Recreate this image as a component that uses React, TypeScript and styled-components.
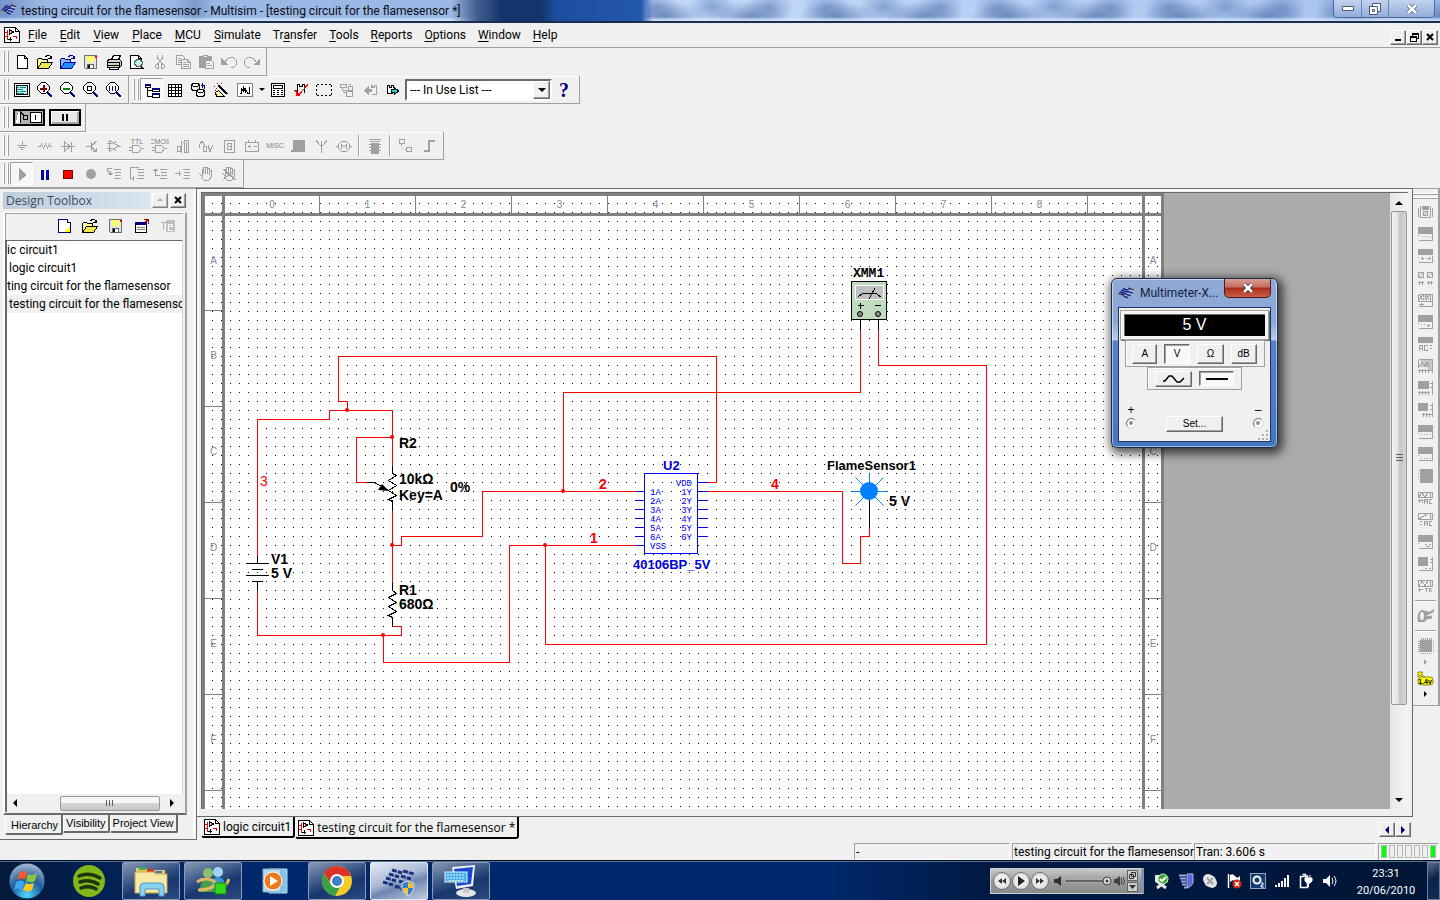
import React from "react";
import styled, { createGlobalStyle, css } from "styled-components";

const K = "#000000";
const G = "#a0a0a0";
const D = "#696969";
const FACE = "#f0f0f0";
const RED = "#ff0000";
const BLUE = "#0000ff";
const NAVY = "#000080";

const UI = `Roboto, "Liberation Sans", sans-serif`;
const TAB = `"Open Sans", "Liberation Sans", sans-serif`;
const CLASSIC = `"Liberation Sans", Arial, sans-serif`;

const GlobalStyle = createGlobalStyle`
  *, *::before, *::after { box-sizing: border-box; }
  html, body { margin: 0; background: ${FACE}; }
  body { font-family: ${UI}; font-size: 12px; line-height: 16px; color: #000; }
  button, select { font: inherit; color: inherit; margin: 0; padding: 0; border: 0; background: none; }
  ul { margin: 0; padding: 0; list-style: none; }
`;

const raised = css`
  border: 1px solid;
  border-color: #fff ${D} ${D} #fff;
  box-shadow: inset -1px -1px 0 ${G};
`;

const sunken = css`
  border: 1px solid;
  border-color: ${G} #fff #fff ${G};
`;

/* ---------- icons ---------- */

type Part = [d: string, fill?: string, stroke?: string];

const Svg = styled.svg`
  display: block;
  flex: none;
`;

function Art({ parts, size = 16 }: { parts: Part[]; size?: number }) {
  return (
    <Svg width={size} height={size} viewBox={`0 0 ${size} ${size}`} shapeRendering="crispEdges" aria-hidden="true">
      {parts.map(([d, fill = "none", stroke = K], i) => (
        <path key={i} d={d} fill={fill} stroke={stroke} />
      ))}
    </Svg>
  );
}

const N = "none";
const lens: Part[] = [
  ["M9 9L15 15M10 9L15 14M9 10L14 15", N, NAVY],
  ["M4.5 .5H8.5L12.5 4.5V7.5L8.5 11.5H4.5L.5 7.5V4.5Z", "#ffffff", K],
];
const hand = "M3.5 9.5L1.5 7.5L4.5 10.5V3.5H5.5V7.5V1.5H7.5V7.5V1.5H9.5V7.5V2.5H11.5V8.5V4.5H13.5V10.5L10.5 14.5H6.5L3.5 11.5";
const lines = "M8 3.5H15M9 6.5H15M9 9.5H15M8 12.5H15";

const icons: Record<string, Part[]> = {
  doc: [["M3.5 1.5H10.5L13.5 4.5V14.5H3.5ZM10.5 1.5V4.5H13.5", "#ffffff"]],
  newDesign: [
    ["M2.5 1.5H11.5L14.5 4.5V14.5H2.5Z", "#ffffff", NAVY],
    ["M11.5 1.5V4.5H14.5", "#ffff99", NAVY],
    ["M8 14L14 8V14Z", "#ffff00", N],
  ],
  open: [
    ["M.5 14.5V5.5L1.5 4.5H4.5L5.5 5.5H10.5V8.5", "#ffff99"],
    ["M.5 14.5L4.5 8.5H15.5L11.5 14.5Z", "#f0e850"],
    ["M8.5 3.5L9.5 1.5H12.5L14.5 4.5M11 4.5H15M14.5 2V5"],
  ],
  openBlue: [
    ["M.5 14.5V5.5L1.5 4.5H4.5L5.5 5.5H10.5V8.5", "#80c0ff", NAVY],
    ["M.5 14.5L4.5 8.5H15.5L11.5 14.5Z", "#1e90ff", "#0000a0"],
    ["M8.5 3.5L9.5 1.5H12.5L14.5 4.5M11 4.5H15M14.5 2V5", N, "#0000a0"],
  ],
  save: [
    ["M1.5 1.5H13.5V14.5H2.5L1.5 13.5Z", "#e4e4e4", "#707070"],
    ["M4 2H11V8H4Z", "#ffff66", N],
    ["M4.5 10.5H10.5V14.5H4.5Z", "#ffffff", "#606060"],
    ["M5 11H7V14H5Z", K, N],
    ["M12 2H14V4H12Z", RED, N],
  ],
  print: [
    ["M5.5 5.5L7.5 1.5H14.5L12.5 5.5Z", "#ffffff"],
    ["M1.5 6.5L3.5 5.5H13.5L15.5 7.5V11.5L13.5 13.5H1.5Z", "#d0d0d0"],
    ["M1 8.5H14M2 11.5H13M13.5 8V13"],
    ["M9 10H11V11H9Z", "#e0d000", N],
    ["M3.5 13.5H12.5V15.5H3.5Z", "#ffffff"],
  ],
  preview: [
    ["M1.5 1.5H9.5L12.5 4.5V14.5H1.5Z", "#ffffff"],
    ["M9.5 1.5V4.5H12.5"],
    ["M8 5.5H11L13.5 8V10L11 12.5H8L5.5 10V8Z", "#c0f0f0", "#606060"],
    ["M12 12L15.5 15.5M12 13L14.5 15.5", N, K],
  ],
  cut: [["M5.5 1V4L10.5 10M10.5 1V4L5.5 10M4.5 10.5H6.5V14.5H4.5L3.5 13.5V11.5ZM9.5 10.5H11.5L12.5 11.5V13.5L11.5 14.5H9.5Z", N, G]],
  copy: [
    ["M1.5 1.5H7.5L9.5 3.5V10.5H1.5ZM3 4.5H6M3 6.5H8M3 8.5H8", N, G],
    ["M6.5 5.5H12.5L15.5 8.5V14.5H6.5Z", FACE, G],
    ["M8 8.5H11M8 10.5H14M8 12.5H14M12.5 5.5V8.5H15", N, G],
  ],
  paste: [
    ["M1.5 2.5H13.5V13.5H1.5Z", G, G],
    ["M5.5 1.5H9.5V3.5H5.5Z", FACE, G],
    ["M7.5 6.5H13.5L15.5 8.5V14.5H7.5Z", FACE, G],
    ["M9 9.5H12M9 11.5H14", N, G],
  ],
  undo: [["M0 4V11H7Z", G, N], ["M3.5 8.5L6.5 4.5L9.5 3.5H12.5L15.5 6.5V10.5L12.5 13.5H10", N, G]],
  redo: [["M16 4V11H9Z", G, N], ["M12.5 8.5L9.5 4.5L6.5 3.5H3.5L.5 6.5V10.5L3.5 13.5H6", N, G]],
  fit: [
    ["M.5 1.5H15.5V14.5H.5ZM2.5 3.5H13.5V12.5H2.5Z", "#ffffff"],
    ["M3 4H13V12H3Z", "#b0f4f4", N],
    ["M3 5.5H5M6 5.5H12M3 7.5H9M3 9.5H5M6 9.5H12M3 11.5H10", N, "#208080"],
  ],
  zoomIn: [...lens, ["M6 3V10M7 3V10M3 6H10M3 7H10", N, "#800000"]],
  zoomOut: [...lens, ["M3 6H10M3 7H10", N, "#008000"]],
  zoomArea: [...lens, ["M4.5 4.5H8.5V8.5H4.5Z"]],
  zoom100: [...lens, ["M3.5 4V9M6.5 4V9M9.5 4V9", N, NAVY]],
  tree: [
    ["M1.5 2.5H6.5V5.5H1.5ZM8.5 6.5H15.5V9.5H8.5ZM8.5 12.5H15.5V15.5H8.5ZM3.5 6V14.5H8M4 8.5H8", "#ffffff"],
    ["M1 2H7V4H1ZM8 6H16V8H8ZM8 11H16V13H8Z", NAVY, N],
  ],
  grid: [["M1.5 2.5H14.5V14.5H1.5ZM1 5.5H15M1 8.5H15M1 11.5H15M4.5 2V15M8.5 2V15M11.5 2V15", "#ffffff"]],
  database: [
    ["M1.5 2.5L3.5 1.5H7.5L9.5 2.5V7.5L7.5 8.5H3.5L1.5 7.5ZM2 3.5L4 4.5H7L9 3.5", "#f0f0f0"],
    ["M6.5 8.5L8.5 7.5H12.5L14.5 8.5V13.5L12.5 14.5H8.5L6.5 13.5ZM7 9.5L9 10.5H12L14 9.5", "#f0f0f0"],
    ["M11 3.5H15M12.5 1V6M14.5 3V6.5", N, NAVY],
  ],
  wizard: [
    ["M5.5 3.5L14.5 12.5M5.5 4.5L13.5 12.5M6.5 3.5L15.5 12.5"],
    ["M2.5 10.5L5.5 8.5L11.5 14.5H3.5Z", "#f0f0a0"],
    ["M1 4.5H2M3 6.5H4M8 1.5H9M2 8.5H3M4 1.5H5", N, "#c00000"],
  ],
  graph: [
    ["M.5 1.5H15.5V14.5H.5Z", "#ffffff", "#808080"],
    ["M3 11.5H4.5V6.5L6.5 9.5V4.5L8.5 10.5V6.5L10.5 11.5H12.5V5", N, K],
  ],
  calc: [
    ["M1.5 1.5H14.5V14.5H1.5Z", "#ffffff"],
    ["M3.5 3.5H12.5V6.5H3.5Z"],
    ["M3 8.5H5M7 8.5H9M11 8.5H13M3 10.5H5M7 10.5H9M11 10.5H13M3 12.5H5M7 12.5H9M11 12.5H13"],
  ],
  erc: [
    ["M4.5 11V2.5H6.5V4.5H9.5V2.5H11.5V11", N, K],
    ["M1.5 8L5.5 13.5L14.5 2.5M2.5 8L6 12.5L15 2.5M3 11H6V13H3Z", N, RED],
  ],
  select: [["M.5 3V5M.5 7V9M.5 11V13M15.5 3V5M15.5 7V9M15.5 11V13M1 2.5H3M5 2.5H7M9 2.5H11M13 2.5H15M1 13.5H3M5 13.5H7M9 13.5H11M13 13.5H15"]],
  hierDim: [["M1.5 2.5H7.5V5.5H1.5ZM9.5 4.5H13.5V8.5H9.5ZM7.5 9.5H13.5V14.5H7.5ZM3.5 6V8.5H8M4 10.5H7M10 2.5H12", N, G]],
  backDim: [["M2 8.5L7 4V13ZM7 7H10V10H7Z", G, N], ["M9.5 6V3.5H10.5V5H12.5V3.5H14.5V12.5H10", N, G]],
  forward: [["M8 11.5H2.5V3.5H4.5V5H6.5V3.5H8.5V6", "#ffffff"], ["M6.5 7.5H9.5V5.5L13.5 9L9.5 12.5V10.5H6.5Z", "#00e0e0"]],
  ground: [["M3 7.5H13M5 9.5H11M7 11.5H9M8.5 3V7", N, G]],
  resistor: [["M1 8.5H3L4.5 6L6.5 10L8.5 6L10.5 10L12.5 6L13.5 8.5H15", N, G]],
  diode: [["M1 8.5H15M4.5 4V13L10.5 8.5ZM11.5 3.5V13.5", N, G]],
  transistor: [["M3 8.5H8M8.5 4V13M9 7.5L13.5 3M9 9.5L13 13.5H10M13.5 10V14", N, G]],
  opamp: [["M3.5 2.5V13.5L12.5 8ZM1 5.5H6M1 10.5H6M12 8.5H15M9 3V5M9 11V13", N, G]],
  gate: [["M4.5 7.5H10.5L13.5 10.5L10.5 14.5H4.5ZM1 9.5H4M1 12.5H4M13 10.5H16", N, G]],
  mixed: [["M2.5 8.5H5.5V13.5H2.5ZM6.5 3V14.5M9.5 2.5H13.5V14.5H9.5ZM8 4.5H10M11 4V14", N, G]],
  analog: [["M1 9.5L2.5 4.5L4.5 3.5L6.5 7.5M5.5 8.5H8.5V13.5H5.5ZM10 7.5L12 13.5L14.5 7.5", N, G]],
  indicator: [["M3.5 2.5H13.5V14.5H3.5ZM6.5 5H10.5M6.5 8.5H10.5M6.5 11.5H10.5M6.5 5V8M10.5 5V12M6.5 9V12", N, G]],
  power: [["M1.5 4.5H14.5V13.5H1.5ZM4.5 2V4M11.5 2V4M3.5 8.5H7M9.5 8.5H13M5.5 7V10", N, G]],
  adv: [["M3 2H15V12H3ZM1 12H15V14H1Z", G, N], ["M1 13.5H15", N, G]],
  rf: [["M3 2.5L8.5 8.5L14 2.5M8.5 3V15", N, G]],
  motor: [["M0 8.5H3M13 8.5H16M5.5 3.5H10.5L13.5 6.5V10.5L10.5 13.5H5.5L2.5 10.5V6.5ZM5.5 11V6.5L8 9L10.5 6.5V11", N, G]],
  mcu: [["M4 5H12V16H4ZM2 6H14V7H2ZM2 9H14V10H2ZM2 12H14V13H2Z", G, N], ["M2 1.5H14M3 3.5H13", N, G]],
  hblock: [["M1.5 1.5H6.5V5.5H1.5ZM8.5 9.5H13.5V13.5H8.5ZM3.5 6V8M3.5 10.5H5M7 11.5H8", N, G]],
  bus: [["M3 12H7V2H14V4H9V14H3Z", G, N]],
  play: [["M5 2L13 9L5 15Z", G, N]],
  pause: [["M4.5 4.5H6.5V13.5H4.5ZM9.5 4.5H11.5V13.5H9.5Z", "#0000ff", NAVY]],
  stop: [["M3.5 4.5H12.5V12.5H3.5Z", RED, "#800000"]],
  stepInto: [[lines, N, G], ["M6 2.5H1.5V5.5H4.5V9M2 7.5H7M3 8.5H6", N, G]],
  stepOver: [[lines, N, G], ["M9.5 1.5H1.5V12.5H5M4.5 10V15", N, G]],
  stepOut: [[lines, N, G], ["M3.5 3V9.5H8M1 4.5H6M2 3.5H5", N, G]],
  runTo: [[lines, N, G], ["M0 7.5H6M4.5 5V10", N, G]],
  breakpoint: [[hand, N, G]],
  removeBp: [[hand, N, G], ["M2 3L14 14M14 3L2 14M3 3L15 14", N, G]],
  window: [
    ["M1.5 4.5H12.5V14.5H1.5Z", "#ffffff"],
    ["M1 4H13V7H1Z", NAVY, N],
    ["M3 9.5H11M3 11.5H11", N, "#808080"],
    ["M10 1.5H15M14.5 1V6M11 4.5L14 1.5", N, "#a00000"],
  ],
  rename: [["M6 2H15V14H6Z", "#c0c0c0", N], ["M1 4.5H6M3.5 5V12", N, "#b0b0b0"], ["M8.5 8.5H12.5V6.5H8.5V12.5H13", N, "#ffffff"]],
  schematic: [
    ["M.5 .5H11.5L15.5 4.5V15.5H.5Z", "#ffffff"],
    ["M11.5 .5V4.5H15.5"],
    ["M1 5.5H4M3.5 3V12.5H8M7.5 3V7M9 9.5H12.5V12M1 9.5H3", N, RED],
    ["M5.5 2.5L9.5 5L5.5 7.5ZM4 12H8M6 10V14"],
  ],
};

const block = "M0 0H15V7H0Z";
const shell = "M0 8.5H1M.5 13.5H14.5V7";
const sideIcons: Record<string, Part[]> = {
  "Multimeter": [["M4 1H11V5H4Z", G, N], ["M.5 3V12M2.5 1V12H12.5V1M14.5 3V12M5.5 6.5H9.5V10.5H5.5ZM6 10L9.5 6.5", N, G]],
  "Function generator": [[block, G, N], [shell + "M4 9.5H5M7 9.5H8M10 9.5H11M11.5 10.5H13", N, G]],
  "Wattmeter": [["M0 0H15V6H0Z", G, N], [shell + "M3 9.5H6M4.5 8V11M8 9.5H9M10 9.5H13M11.5 8V11", N, G]],
  "Oscilloscope": [["M.5 1.5H5.5V6.5H.5ZM9.5 1.5H14.5V6.5H9.5ZM1 6L5 2M10 6L14 2M0 11.5H6M9 11.5H15M1.5 10V14M4.5 10V14M10.5 10V14M13.5 10V14", N, G]],
  "Four channel oscilloscope": [["M.5 1.5H14.5V13.5H1M.5 1.5V9M1 8.5H15M1 2L5 7L8 2L11 7M1 7L5 2L8 7L11 2M12.5 2V8M1 11.5H6M3.5 10V14", N, G]],
  "Bode plotter": [[block, G, N], [shell + "M3 9.5H4M6 9.5H7M9 10.5H12M10.5 9V12", N, G]],
  "Frequency counter": [["M0 0H15V6H0Z", G, N], ["M1.5 14V8.5H4.5V14M2 11.5H4M10 8.5H6.5V13.5H9.5V11.5M12 8.5H14M12 11.5H14", N, G]],
  "Word generator": [["M.5 .5H14.5V13.5M.5 1V9M1 8L4 3L7 8L9 3L11 8", "#c8c8c8", G], ["M0 11.5H13M1.5 10V14M4.5 10V14M7.5 10V14M10.5 10V14", N, G]],
  "Logic converter": [["M0 0H11V8H0Z", G, N], ["M14.5 0V14M12 2.5H14M12 6.5H14M0 11.5H12M1.5 10V14M4.5 10V14M7.5 10V14M10.5 10V14", N, G]],
  "Logic analyzer": [["M0 0H10V8H0Z", G, N], ["M14.5 0V14M12 2.5H14M12 6.5H14M4 11.5H14M5.5 10V14M8.5 10V14M11.5 10V14", N, G]],
  "IV analyzer": [[block, G, N], [shell + "M3 9.5H4M6 9.5H7M9 9.5H10M12 9.5H13", N, G]],
  "Distortion analyzer": [[block, G, N], [shell + "M3 11.5H4M6 11.5H7M9 11.5H10M12 11.5H13", N, G]],
  "Spectrum analyzer": [["M2 0H15V14H2Z", G, N], ["M.5 1V2M.5 4V5M.5 7V8M.5 10V11", N, G]],
  "Network analyzer": [["M.5 1.5H14.5V6.5H.5ZM1 6L4 2L7 6L10 2M12.5 1V6M0 9.5H5M1.5 8V12M4.5 8V12M6.5 13V8.5H9.5V13M7 10.5H9M14 8.5H11.5V12.5H13.5", N, G]],
  "Agilent generator": [["M.5 .5H14.5V6.5H.5ZM1 6L9 1M12.5 1V6M2 8.5H4M2 11.5H4M6.5 13V8.5H9.5V13M7 10.5H9M14 8.5H11.5V12.5H13.5", N, G]],
  "Agilent multimeter": [[block, G, N], [shell + "M7 9.5H9M11 9.5H13M8 11.5H12", N, G]],
  "Agilent oscilloscope": [["M0 0H10V9H0Z", G, N], ["M14.5 0V13.5H1M12 2.5H14M12 5.5H14M7 11.5H9M11 11.5H13", N, G]],
  "Tektronix oscilloscope": [["M.5 1.5H14.5V7.5H.5ZM1 7L4 2L7 7L10 2M12.5 2V7M0 10.5H5M1.5 9V13M7 9.5H10M8.5 9V13M11.5 9V13M14 9L12 11L14 13", N, G]],
};

/* ---------- window frame ---------- */

const Frame = styled.div`
  position: relative;
  display: flex;
  flex-direction: column;
  min-height: 100vh;
  overflow: hidden;
  background: ${FACE};
`;

const TitleBar = styled.header`
  display: flex;
  align-items: flex-start;
  height: 23px;
  padding-left: 1px;
  gap: 4px;
  border-bottom: 2px solid #1b2c52;
  background:
    linear-gradient(180deg, rgba(255, 255, 255, 0.1) 0 80%, rgba(220, 235, 255, 0.8) 95%),
    linear-gradient(90deg, rgba(60, 95, 160, 0.5) 0, transparent 3% 12%, rgba(50, 80, 140, 0.35) 13.5%, transparent 15% 28%, transparent 100%),
    linear-gradient(90deg, #8fb0e2 0 45%, transparent 45%),
    radial-gradient(ellipse at center, rgba(60, 95, 160, 0.7), transparent 65%) 20px 0 / 86px 34px,
    radial-gradient(ellipse at center, rgba(80, 120, 185, 0.65), transparent 60%) 0 -12px / 57px 38px,
    linear-gradient(110deg, #a9c4ee 0, #bcd3f6 50%, #9cbbec 100%);
`;
const TitleText = styled.h1`
  flex: 1;
  align-self: stretch;
  margin: 0;
  padding-top: 3px;
  font-size: 12px;
  line-height: 16px;
  font-weight: 400;
  white-space: nowrap;
  color: #0c0c14;
  background: linear-gradient(90deg,
    transparent 0 430px, #46618f 455px, #14356c 480px 520px, #1d4d9e 535px, #2458ac 620px, transparent 632px);
`;
const AppIcon = styled.span`
  padding-top: 3px;
`;
const Caption = styled.div`
  display: flex;
  height: 18px;
  margin-right: 5px;
  border: 1px solid #51699a;
  border-top: 0;
  border-radius: 0 0 5px 5px;
  background: linear-gradient(#c2d2ee, #93aedb);
`;
const CaptionButton = styled.button<{ $w: number }>`
  display: grid;
  place-items: center;
  width: ${(p) => p.$w}px;
  & + & { border-left: 1px solid #6a83b3; }
`;

const MenuBar = styled.nav`
  display: flex;
  align-items: center;
  height: 25px;
  padding: 0 2px 0 4px;
  border-bottom: 1px solid ${G};
`;
const MenuItem = styled.button`
  margin-left: 13px;
  white-space: nowrap;
  &:first-of-type { margin-left: 8px; }
  &:nth-of-type(n + 7) { margin-left: 12px; }
  u { text-underline-offset: 2px; }
`;
const MdiButtons = styled.div`
  display: flex;
  margin-left: auto;
  padding-top: 4px;
`;
const SmallButton = styled.button<{ $dim?: boolean }>`
  display: grid;
  place-items: center;
  width: 16px;
  height: 15px;
  background: ${FACE};
  ${raised}
  opacity: ${(p) => (p.$dim ? 0.8 : 1)};
`;

/* ---------- toolbars ---------- */

const BarRow = styled.div`
  display: flex;
  gap: 1px;
`;
const Bar = styled.div`
  display: flex;
  align-items: center;
  height: 28px;
  padding-right: 3px;
  border: solid ${G};
  border-width: 0 1px 1px 0;
  box-shadow: inset 0 1px 0 #fff;
`;
const Grip = styled.span`
  align-self: stretch;
  width: 7px;
  margin: 3px 0 3px 3px;
  background: linear-gradient(90deg, #fff 0 1px, ${G} 1px 2px, transparent 2px 4px, #fff 4px 5px, ${G} 5px 6px, transparent 6px);
`;
const Tool = styled.button<{ $on?: boolean; $w?: number }>`
  display: grid;
  place-items: center;
  width: ${(p) => p.$w ?? 23}px;
  height: 23px;
  ${(p) => p.$on && css`${sunken} background: #f7f7f7;`}
`;
const Rule = styled.span`
  width: 2px;
  height: 21px;
  margin: 0 3px;
  border-left: 1px solid ${G};
  border-right: 1px solid #fff;
`;
const Combo = styled.label`
  display: grid;
  width: 147px;
  height: 22px;
  margin-left: 1px;
  border: 2px solid;
  border-color: ${D} #fff #fff ${D};
  background: #fff;
`;
const ComboSelect = styled.select`
  grid-area: 1 / 1;
  appearance: none;
  padding-left: 3px;
  outline: 0;
`;
const ComboArrow = styled.span`
  grid-area: 1 / 1;
  justify-self: end;
  display: grid;
  place-items: center;
  width: 17px;
  background: ${FACE};
  pointer-events: none;
  ${raised}
`;
const Help = styled(Tool)`
  width: 24px;
  color: ${NAVY};
  font: 900 20px/22px "Liberation Serif", serif;
`;
const SimSwitch = styled.button`
  display: grid;
  place-items: center;
  width: 32px;
  height: 17px;
  margin: 0 1px 0 3px;
  border: 2px solid #000;
  background: #e8e8e8;
  box-shadow: inset 1px 1px 0 #fff, inset -2px -2px 0 #a8a8a8;
`;

/* ---------- workspace ---------- */

const Workspace = styled.main`
  display: flex;
  flex: 1;
  min-height: 0;
`;

const Dock = styled.aside`
  display: flex;
  flex-direction: column;
  flex: none;
  width: 197px;
  margin-bottom: 3px;
  padding: 3px 10px 4px 3px;
  border: solid ${D};
  border-width: 0 1px 1px 0;
  box-shadow: inset 0 1px 0 ${G}, inset -3px 0 0 #fafafa;
`;
const DockHead = styled.div`
  display: flex;
  gap: 2px;
  align-items: center;
  height: 18px;
  margin-bottom: 3px;
`;
const DockTitle = styled.h2`
  flex: 1;
  margin: 0;
  padding-left: 3px;
  font: 400 12px/17px ${TAB};
  color: #3c4a60;
  background: linear-gradient(90deg, #bfcddb, #d7e4f2);
`;
const DockBody = styled.div`
  display: flex;
  flex: 1;
  flex-direction: column;
  margin-right: -1px;
  padding: 0 2px 1px 0;
  border: solid;
  border-width: 1px 2px 2px 2px;
  border-color: #fff ${G} ${D} #fff;
`;
const DockTools = styled.div`
  display: flex;
  align-items: flex-start;
  justify-content: flex-end;
  height: 27px;
  padding-right: 2px;
  border: solid ${G};
  border-width: 1px 0 0 1px;
`;
const Tree = styled.ul`
  flex: 1;
  border: solid ${D};
  border-width: 1px 1px 0 2px;
  border-right-color: #d8d8d8;
  background: #fff;
  overflow: hidden;
`;
const TreeItem = styled.li<{ $indent?: boolean; $on?: boolean }>`
  overflow: hidden;
  white-space: nowrap;
  line-height: 18px;
  padding-left: ${(p) => (p.$indent ? 2 : 0)}px;
  background: ${(p) => (p.$on ? FACE : "transparent")};
`;
const HScroll = styled.div`
  display: flex;
  align-items: center;
  justify-content: space-between;
  height: 18px;
  padding: 0 7px 0 4px;
  border-left: 2px solid ${D};
  background: ${FACE};
`;
const HThumb = styled.span`
  display: grid;
  place-items: center;
  width: 100px;
  height: 15px;
  margin-left: 32px;
  border: 1px solid #989898;
  border-radius: 2px;
  background: linear-gradient(#f6f6f6 45%, #d4d4d8 50%, #c8c8cc);
`;
const DockTabs = styled.div`
  display: flex;
  align-items: flex-start;
  height: 20px;
  margin-left: 2px;
`;
const DockTab = styled.button<{ $on?: boolean }>`
  height: ${(p) => (p.$on ? 20 : 18)}px;
  padding: ${(p) => (p.$on ? "2px 3px 0 5px" : "0 2px")};
  border: solid;
  border-width: 0 2px 2px 1px;
  border-color: ${FACE} ${D} ${D} #fff;
  border-radius: 0 0 2px 2px;
  font: 400 11px/16px ${CLASSIC};
  white-space: nowrap;
`;

const Center = styled.section`
  display: flex;
  flex: 1;
  flex-direction: column;
  min-width: 0;
  border-top: 1px solid ${D};
`;
const Mdi = styled.div`
  display: flex;
  flex: 1 1 0;
  min-height: 0;
  padding: 3px 4px 7px;
  border: solid ${D};
  border-width: 0 1px 1px 0;
  box-shadow: inset 2px 2px 0 #fafafa;
`;
const Viewport = styled.div`
  display: flex;
  flex: 1;
  min-width: 0;
  border: solid ${D};
  border-width: 1px 0 0 1px;
  background: #ababab;
  overflow: hidden;
`;
const VScroll = styled.div`
  display: flex;
  flex-direction: column;
  align-items: center;
  flex: none;
  width: 18px;
  margin-left: auto;
  padding: 6px 1px 5px;
  background: linear-gradient(90deg, #e6e6e6, #f4f4f4);
`;
const VTrack = styled.div`
  flex: 1;
  align-self: stretch;
  margin: 4px 0;
`;
const VThumb = styled.div`
  display: grid;
  place-items: center;
  height: 85%;
  border: 1px solid #989898;
  border-radius: 2px;
  background: linear-gradient(90deg, #f4f4f4, #e0e0e2 45%, #c4c4c8 55%, #d4d4d6);
`;

/* ---------- sheet ---------- */

const Sheet = styled.div`
  display: grid;
  grid-template: 20px 1fr / 20px 1fr 19px;
  flex: none;
  width: 962px;
  border: 3px solid #808080;
  border-bottom: 0;
  overflow: hidden;
  background:
    linear-gradient(#fff 0 8px, transparent 8px) -1px -1px / 9px 9px,
    linear-gradient(90deg, #fff 0 8px, #000 8px) -1px -1px / 9px 9px;
`;
const Corner = styled.span<{ $right?: boolean }>`
  border: solid #808080;
  border-width: ${(p) => (p.$right ? "0 0 3px 3px" : "0 3px 3px 0")};
`;
const TopRuler = styled.div`
  display: flex;
  min-width: 0;
  overflow: hidden;
  border-bottom: 3px solid #808080;
`;
const SideRuler = styled.div<{ $right?: boolean }>`
  min-height: 0;
  overflow: hidden;
  border: solid #808080;
  border-width: ${(p) => (p.$right ? "0 0 0 3px" : "0 3px 0 0")};
`;
const label = css`
  display: flex;
  align-items: center;
  justify-content: center;
  flex: none;
  color: #808a98;
  font: 400 10px/14px ${CLASSIC};
`;
const ColMark = styled.span`
  ${label}
  width: 96px;
  border-right: 1px solid #808080;
  &:first-child { width: 95px; }
`;
const RowMark = styled.span`
  ${label}
  height: 96px;
  padding-bottom: 5px;
  border-bottom: 1px solid #808080;
  &:first-child { height: 95px; }
`;
const Schematic = styled.svg`
  display: block;
  width: 917px;
  height: 593px;
`;

const wires = [
  "M707 482H716V356H338V401H347V410",
  "M257 555V419H329V410H392V465",
  "M392 437H356V482H366",
  "M392 510V582",
  "M392 626H401V635H257V590",
  "M383 635V662H509V545H635",
  "M392 545H401V536H482V491H635",
  "M563 491V392H860V329",
  "M878 329V365H986V644H545V545",
  "M707 491H842V563H860V536H869V527",
];
const joints = [[347, 410], [392, 437], [392, 545], [383, 635], [563, 491], [545, 545]];
const pinRows = [491, 500, 509, 518, 527, 536];

function Circuit() {
  return (
    <Schematic viewBox="225 216 917 593" role="img" aria-label="Flame sensor test circuit">
      <g transform="translate(.5 .5)" fill="none" stroke={RED} shapeRendering="crispEdges">
        {wires.map((d) => <path key={d} d={d} />)}
      </g>
      {joints.map(([x, y]) => <circle key={`${x}-${y}`} cx={x} cy={y} r="2" fill={RED} />)}

      <g transform="translate(.5 .5)" fill="none" stroke={K} shapeRendering="crispEdges">
        <path d="M257 555V563M245 563H268M251 569H262M245 575H268M251 581H262M257 581V590" />
        <path d="M366 482H374L388 490M392 465V473L396 475L388 480L396 485L388 490L396 495L388 499L392 501V510" />
        <path d="M392 582V590L396 593L388 597L396 602L388 606L396 611L388 615L392 617V626" />
        <path d="M869 500V527M860 314V329M878 314V329" />
      </g>
      <path d="M389 491L378 490L382 484Z" fill={K} />

      <g transform="translate(.5 .5)" fill="none" stroke={BLUE} shapeRendering="crispEdges">
        <rect x="644" y="473" width="53" height="80" />
        <path d={pinRows.map((y) => `M635 ${y}H644M697 ${y}H707`).join("") + "M635 545H644M697 482H707"} />
      </g>
      <g fill={BLUE} fontFamily='"Liberation Mono", monospace' fontSize="9">
        <text x="692" y="486" textAnchor="end">VDD</text>
        {pinRows.map((y, i) => <text key={y} x="650" y={y + 4}>{`${i + 1}A`}</text>)}
        {pinRows.map((y, i) => <text key={y} x="692" y={y + 4} textAnchor="end">{`${i + 1}Y`}</text>)}
        <text x="650" y="549">VSS</text>
      </g>

      <path transform="translate(.5 .5)" d="M851 491H887M869 473V491M855 477L869 491L883 477M855 505L869 491L883 505" fill="none" stroke="#0080ff" />
      <circle cx="869" cy="491" r="9" fill="#0080ff" />

      <g shapeRendering="crispEdges" stroke={K}>
        <rect x="851.5" y="281.5" width="35" height="38" fill="#c0dcc0" />
        <rect x="855" y="285" width="28" height="14" fill="#c0c0c0" stroke="#ffffff" />
        <path d="M858 297L862 294L867 293H872L877 294L881 297M869 299L875 288M858 305.5H864M860.5 303V309M875 305.5H881" fill="none" />
      </g>
      <circle cx="860" cy="314" r="2.5" fill="#909090" stroke={K} />
      <circle cx="878" cy="314" r="2.5" fill="#909090" stroke={K} />
      <text x="853" y="277" fontFamily='"Liberation Mono", monospace' fontSize="13" fontWeight="700">XMM1</text>

      <g fontFamily='"Liberation Sans", Arial, sans-serif' fontWeight="700" fontSize="14">
        <text x="399" y="448">R2</text>
        <text x="399" y="484">10kΩ</text>
        <text x="399" y="500">Key=A</text>
        <text x="450" y="492">0%</text>
        <text x="399" y="595">R1</text>
        <text x="399" y="609">680Ω</text>
        <text x="271" y="564">V1</text>
        <text x="271" y="578">5 V</text>
        <text x="889" y="506">5 V</text>
      </g>
      <g fontFamily='"Liberation Sans", Arial, sans-serif' fontWeight="700" fontSize="13">
        <text x="827" y="470">FlameSensor1</text>
        <text x="663" y="470" fill="#0000e0">U2</text>
        <text x="633" y="569" fill="#0000e0">40106BP_5V</text>
        <g fill={RED} fontSize="14">
          <text x="260" y="486" fontWeight="400">3</text>
          <text x="599" y="489">2</text>
          <text x="590" y="543">1</text>
          <text x="771" y="489">4</text>
        </g>
      </g>
    </Schematic>
  );
}

/* ---------- document tabs, side bar, status ---------- */

const DocTabs = styled.div`
  display: flex;
  align-items: flex-start;
  flex: none;
  height: 26px;
  padding: 0 2px 0 4px;
`;
const DocTab = styled.button<{ $on?: boolean }>`
  display: flex;
  align-items: center;
  gap: 3px;
  height: ${(p) => (p.$on ? 22 : 21)}px;
  padding: ${(p) => (p.$on ? "2px 2px 0" : "0 2px")};
  border: solid #000;
  border-width: 0 2px 2px 1px;
  border-left-color: #fff;
  border-radius: 0 0 3px 3px;
  font-family: ${(p) => (p.$on ? TAB : UI)};
  white-space: nowrap;
  background: ${FACE};
`;
const TabNav = styled.div`
  display: flex;
  margin: 5px 0 0 auto;
`;

const Instruments = styled.aside`
  display: flex;
  flex: none;
  flex-direction: column;
  align-items: center;
  align-self: flex-start;
  width: 27px;
  height: 518px;
  padding-top: 4px;
  border: solid ${G};
  border-width: 1px 2px 1px 0;
`;
const SideGrip = styled.span`
  flex: none;
  align-self: stretch;
  height: 8px;
  background: linear-gradient(#fff 0 1px, ${G} 1px 2px, transparent 2px 4px, #fff 4px 5px, ${G} 5px 6px, transparent 6px);
`;
const SideTool = styled.button`
  display: grid;
  place-items: center;
  flex: none;
  width: 23px;
  height: 22px;
`;
const SideRule = styled.span`
  flex: none;
  align-self: stretch;
  height: 2px;
  margin: 3px 2px;
  border-top: 1px solid ${G};
  border-bottom: 1px solid #fff;
`;
const SideArrow = styled.button`
  display: grid;
  place-items: center;
  flex: none;
  height: 10px;
`;

const StatusBar = styled.footer`
  display: flex;
  justify-content: flex-end;
  gap: 2px;
  height: 17px;
  padding-right: 1px;
`;
const Pane = styled.span<{ $w: number }>`
  width: ${(p) => p.$w}px;
  padding-left: 1px;
  ${sunken}
  white-space: nowrap;
`;
const Leds = styled(Pane)`
  display: flex;
  gap: 2px;
  padding: 1px 2px;
`;
const Led = styled.i<{ $on?: boolean }>`
  flex: 1;
  border: 1px solid #b8b8b8;
  background: ${(p) => (p.$on ? "#00ff00" : FACE)};
`;

/* ---------- multimeter window ---------- */

const MeterWindow = styled.section`
  position: absolute;
  top: 278px;
  right: 162px;
  width: 167px;
  padding: 0 6px 5px;
  border: 1px solid #1c2c4c;
  border-radius: 6px;
  background: linear-gradient(180deg, #91abd6 0, #8aa6d4 25%, #b8cbe8 36%, #5583c8 37%, #4676bd 100%);
  box-shadow: inset 0 0 0 1px rgba(255, 255, 255, 0.5), 2px 3px 10px 3px rgba(0, 0, 0, 0.65);
`;
const MeterHead = styled.div`
  display: flex;
  align-items: flex-start;
  gap: 5px;
  height: 28px;
  color: #14213c;
`;
const MeterTitle = styled.h2`
  flex: 1;
  margin: 0;
  padding-top: 6px;
  font: 400 12px/16px ${UI};
  white-space: nowrap;
`;
const MeterIcon = styled.span`
  padding-top: 7px;
`;
const MeterClose = styled.button`
  display: grid;
  place-items: center;
  width: 47px;
  height: 19px;
  border: 1px solid #4a1c24;
  border-top: 0;
  border-radius: 0 0 5px 5px;
  background: linear-gradient(#d8a098, #c66a5c 45%, #b02c18 50%, #c85c48);
`;
const MeterBody = styled.div`
  display: flex;
  flex-direction: column;
  align-items: center;
  height: 135px;
  padding: 2px 1px 0;
  border: 1px solid #1c3468;
  background: ${FACE};
`;
const Reading = styled.output`
  align-self: stretch;
  height: 30px;
  padding: 1px;
  border: 4px solid #f4f4f4;
  outline: 1px solid ${G};
  outline-offset: -1px;
  background: #000;
  box-shadow: inset 1px 1px 0 ${D}, 1px 1px 0 ${D};
  color: #fff;
  text-align: center;
  font: 400 16px/20px ${CLASSIC};
`;
const Group = styled.div<{ $w: number; $h: number }>`
  display: flex;
  align-items: center;
  justify-content: space-evenly;
  width: ${(p) => p.$w}px;
  height: ${(p) => p.$h}px;
  border: 1px solid ${G};
  box-shadow: inset 1px 1px 0 #fff;
`;
const MeterButton = styled.button<{ $on?: boolean; $w: number; $h: number }>`
  display: grid;
  place-items: center;
  width: ${(p) => p.$w}px;
  height: ${(p) => p.$h}px;
  font: 400 10px/14px ${CLASSIC};
  ${raised}
  ${(p) => p.$on && css`border-color: ${D} #fff #fff ${D}; box-shadow: inset 1px 1px 0 ${G}; background: #f8f8f8;`}
`;
const Terminals = styled.div`
  display: flex;
  justify-content: space-between;
  align-items: flex-end;
  align-self: stretch;
  margin-top: 14px;
  padding: 0 5px;
`;
const Terminal = styled.span`
  display: grid;
  justify-items: center;
  font: 400 12px/13px ${CLASSIC};
  padding-bottom: 3px;
`;
const ResizeGrip = styled.span`
  align-self: flex-end;
  margin-top: -2px;
`;

/* ---------- taskbar ---------- */

const TaskBar = styled.footer`
  display: flex;
  align-items: center;
  height: 40px;
  border-top: 1px solid #000c24;
  box-shadow: inset 0 1px 0 #5b7194;
  background: linear-gradient(90deg, #04193a 0, #00286a 14%, #00286a 58%, #001a44 68%, #001636 100%);
`;
const TaskButton = styled.button<{ $open?: boolean; $active?: boolean }>`
  display: grid;
  place-items: center;
  flex: none;
  width: 58px;
  height: 38px;
  margin-right: 4px;
  ${(p) => p.$open && css`
    border: 1px solid #8a9ab8;
    border-radius: 2px;
    background: linear-gradient(160deg, #8797b4 0, #445f8e 35%, #17376e 60%, #2a4a80 100%);
  `}
  ${(p) => p.$active && css`
    border-color: #e0e8f4;
    background: linear-gradient(160deg, #e4eaf4 0, #a9b8d2 45%, #6f86b0 60%, #c0cce0 100%);
  `}
`;
const StartButton = styled(TaskButton)`
  width: 54px;
  margin-right: 6px;
`;
const MediaBand = styled.div`
  display: flex;
  align-items: center;
  gap: 1px;
  width: 154px;
  height: 26px;
  margin: 0 6px 0 auto;
  padding: 0 2px;
  border: 1px solid #d0d0d0;
  border-right: 3px solid #8494ac;
  background: linear-gradient(#c8c8c8, #9c9c9c 50%, #8a8a8a);
`;
const RoundButton = styled.button`
  display: grid;
  place-items: center;
  flex: none;
  width: 18px;
  height: 18px;
  border: 1px solid #707070;
  border-radius: 50%;
  background: radial-gradient(#fff, #d0d0d0);
`;
const TrayButton = styled.button`
  display: grid;
  place-items: center;
  width: 24px;
  height: 30px;
`;
const Clock = styled.time`
  display: block;
  width: 64px;
  margin: 2px 9px 0 12px;
  color: #fff;
  text-align: center;
  font-size: 11px;
  line-height: 17px;
  span { display: block; }
`;
const ShowDesktop = styled.button`
  width: 13px;
  height: 38px;
  border: 1px solid #6b7d9c;
  background: linear-gradient(150deg, #5a6e90, #0b2248 45%, #142c54);
`;

function ChipLogo({ w = 16, h = 13 }: { w?: number; h?: number }) {
  return (
    <Svg width={w} height={h} viewBox="0 0 32 26" aria-hidden="true">
      <path d="M2 14L16 4L31 8L17 22Z" fill="#b8c0e0" />
      <path d="M9 5L20 8M6 8L17 11M3 11L14 14M1 14L12 17M19 4L30 7M17 10L28 13M14 15L24 18M11 19L19 22" stroke="#1c2c84" strokeWidth="3" />
      <path d="M0 20L5 14M26 6L32 2" stroke="#d8a030" strokeWidth="2" />
    </Svg>
  );
}

function Arrow({ dir, color = K }: { dir: "l" | "r" | "u" | "d"; color?: string }) {
  const d = { l: "M6 0V8L2 4Z", r: "M2 0V8L6 4Z", u: "M0 6H8L4 2Z", d: "M0 2H8L4 6Z" }[dir];
  return <Svg width="8" height="8" viewBox="0 0 8 8" aria-hidden="true"><path d={d} fill={color} /></Svg>;
}

function Cross({ color = K }: { color?: string }) {
  return <Svg width="8" height="8" viewBox="0 0 8 8" aria-hidden="true"><path d="M1 1L7 7M7 1L1 7" stroke={color} strokeWidth="2" /></Svg>;
}

function Tag({ name, text, y }: { name?: string; text: string; y: number }) {
  return (
    <Svg width="18" height="16" viewBox="0 0 18 16" aria-hidden="true">
      {name && icons[name].map(([d], i) => <path key={i} d={d} fill="none" stroke={G} shapeRendering="crispEdges" />)}
      <text x="9" y={y} textAnchor="middle" fontSize="7" fontFamily='"Liberation Sans", sans-serif' fill="#808080">{text}</text>
    </Svg>
  );
}

function Tools({ items, on }: { items: [string, string][]; on?: string }) {
  return (
    <>
      {items.map(([icon, name]) => (
        <Tool key={name} $on={on === icon} aria-label={name}><Art parts={icons[icon]} /></Tool>
      ))}
    </>
  );
}

const menus: [string, string, string][] = [
  ["", "F", "ile"], ["", "E", "dit"], ["", "V", "iew"], ["", "P", "lace"], ["", "M", "CU"], ["", "S", "imulate"],
  ["Tr", "a", "nsfer"], ["", "T", "ools"], ["", "R", "eports"], ["", "O", "ptions"], ["", "W", "indow"], ["", "H", "elp"],
];

function Toolbars() {
  return (
    <>
      <BarRow>
        <Bar role="toolbar" aria-label="Standard">
          <Grip />
          <Tools items={[["doc", "New"], ["open", "Open"], ["openBlue", "Open sample"], ["save", "Save"], ["print", "Print"], ["preview", "Print preview"], ["cut", "Cut"], ["copy", "Copy"], ["paste", "Paste"], ["undo", "Undo"], ["redo", "Redo"]]} />
        </Bar>
      </BarRow>
      <BarRow>
        <Bar role="toolbar" aria-label="View">
          <Grip />
          <Tools items={[["fit", "Full screen"], ["zoomIn", "Zoom in"], ["zoomOut", "Zoom out"], ["zoomArea", "Zoom area"], ["zoom100", "Zoom 100%"]]} />
        </Bar>
        <Bar role="toolbar" aria-label="Main">
          <Grip />
          <Tools on="tree" items={[["tree", "Design toolbox"], ["grid", "Spreadsheet"], ["database", "Database manager"], ["wizard", "Component wizard"]]} />
          <Tool aria-label="Grapher" $w={25}><Art parts={icons.graph} /></Tool>
          <Tool aria-label="Grapher options" $w={9}>
            <Svg width="6" height="4" viewBox="0 0 6 4" aria-hidden="true"><path d="M0 0H6L3 3Z" /></Svg>
          </Tool>
          <Tools items={[["calc", "Postprocessor"], ["erc", "Rules check"], ["select", "Capture area"], ["hierDim", "Parent sheet"], ["backDim", "Back annotate"], ["forward", "Forward annotate"]]} />
          <Combo>
            <ComboSelect aria-label="In use list"><option>--- In Use List ---</option></ComboSelect>
            <ComboArrow><Arrow dir="d" /></ComboArrow>
          </Combo>
          <Help aria-label="Help">?</Help>
        </Bar>
      </BarRow>
      <BarRow>
        <Bar role="toolbar" aria-label="Simulation switch">
          <Grip />
          <SimSwitch aria-label="Run">
            <Svg width="28" height="13" viewBox="0 0 28 13" shapeRendering="crispEdges" aria-hidden="true">
              <rect width="28" height="13" fill="#b0b0b0" />
              <path d="M1 12L3 1H5V12Z" fill="#fff" />
              <path d="M5.5 12V1L8.500 4" fill="none" stroke={K} />
              <path d="M8.500 4.500H12.500V8.500H8.500Z" fill="none" stroke={K} />
              <path d="M15.500 1.500H26.500V11.500H15.500Z" fill="#fff" stroke={K} />
              <path d="M20.500 4V9" stroke={K} />
            </Svg>
          </SimSwitch>
          <SimSwitch aria-label="Pause">
            <Svg width="6" height="7" viewBox="0 0 6 7" aria-hidden="true"><path d="M0 0H2V7H0ZM4 0H6V7H4Z" /></Svg>
          </SimSwitch>
        </Bar>
      </BarRow>
      <BarRow>
        <Bar role="toolbar" aria-label="Components">
          <Grip />
          <Tools items={[["ground", "Sources"], ["resistor", "Basic"], ["diode", "Diodes"], ["transistor", "Transistors"], ["opamp", "Analog"]]} />
          <Tool aria-label="TTL"><Tag name="gate" text="TTL" y={6} /></Tool>
          <Tool aria-label="CMOS"><Tag name="gate" text="CMOS" y={6} /></Tool>
          <Tools items={[["mixed", "Mixed digital"], ["analog", "Mixed"], ["indicator", "Indicators"], ["power", "Power"]]} />
          <Tool aria-label="Miscellaneous"><Tag text="MISC" y={10} /></Tool>
          <Tools items={[["adv", "Peripherals"], ["rf", "RF"], ["motor", "Electromechanical"]]} />
          <Rule />
          <Tool aria-label="Microcontrollers"><Art parts={icons.mcu} /></Tool>
          <Rule />
          <Tools items={[["hblock", "Hierarchical block"], ["bus", "Bus"]]} />
        </Bar>
      </BarRow>
      <BarRow>
        <Bar role="toolbar" aria-label="Simulation">
          <Grip />
          <Tools on="play" items={[["play", "Run simulation"], ["pause", "Pause simulation"], ["stop", "Stop simulation"]]} />
          <Tool aria-label="Pause at next boundary">
            <Svg width="16" height="16" viewBox="0 0 16 16" aria-hidden="true"><circle cx="8" cy="8" r="5" fill={G} /></Svg>
          </Tool>
          <Tools items={[["stepInto", "Step into"], ["stepOver", "Step over"], ["stepOut", "Step out"], ["runTo", "Run to cursor"], ["breakpoint", "Toggle breakpoint"], ["removeBp", "Remove breakpoints"]]} />
        </Bar>
      </BarRow>
    </>
  );
}

function DesignToolbox() {
  return (
    <Dock>
      <DockHead>
        <DockTitle>Design Toolbox</DockTitle>
        <SmallButton aria-label="Collapse" $dim><Svg width="6" height="4" viewBox="0 0 6 4" aria-hidden="true"><path d="M0 3H6L3 0Z" fill={G} /></Svg></SmallButton>
        <SmallButton aria-label="Close toolbox"><Cross /></SmallButton>
      </DockHead>
      <DockBody>
        <DockTools>
          {[["newDesign", "New design"], ["open", "Open design"], ["save", "Save design"], ["window", "Close design"], ["rename", "Rename"]].map(([icon, name]) => (
            <Tool key={name} $w={26} aria-label={name}><Art parts={icons[icon]} /></Tool>
          ))}
        </DockTools>
        <Tree>
          <TreeItem>ic circuit1</TreeItem>
          <TreeItem $indent>logic circuit1</TreeItem>
          <TreeItem>ting circuit for the flamesensor</TreeItem>
          <TreeItem $indent $on>testing circuit for the flamesensor</TreeItem>
        </Tree>
        <HScroll>
          <Arrow dir="l" />
          <HThumb><Svg width="8" height="6" viewBox="0 0 8 6" aria-hidden="true"><path d="M.5 0V6M3.500 0V6M6.500 0V6" stroke="#606060" /></Svg></HThumb>
          <Arrow dir="r" />
        </HScroll>
      </DockBody>
      <DockTabs>
        <DockTab $on>Hierarchy</DockTab>
        <DockTab>Visibility</DockTab>
        <DockTab>Project View</DockTab>
      </DockTabs>
    </Dock>
  );
}

const cols = ["0", "1", "2", "3", "4", "5", "6", "7", "8", ""];
const rows = ["A", "B", "C", "D", "E", "F", ""];

function Editor() {
  return (
    <Center>
      <Mdi>
        <Viewport>
          <Sheet>
            <Corner />
            <TopRuler>{cols.map((c, i) => <ColMark key={i}>{c}</ColMark>)}</TopRuler>
            <Corner $right />
            <SideRuler>{rows.map((r, i) => <RowMark key={i}>{r}</RowMark>)}</SideRuler>
            <Circuit />
            <SideRuler $right>{rows.map((r, i) => <RowMark key={i}>{r}</RowMark>)}</SideRuler>
          </Sheet>
          <VScroll>
            <Arrow dir="u" />
            <VTrack>
              <VThumb><Svg width="7" height="8" viewBox="0 0 7 8" aria-hidden="true"><path d="M0 .5H7M0 3.500H7M0 6.500H7" stroke="#606060" /></Svg></VThumb>
            </VTrack>
            <Arrow dir="d" />
          </VScroll>
        </Viewport>
      </Mdi>
      <DocTabs>
        <DocTab><Art parts={icons.schematic} />logic circuit1</DocTab>
        <DocTab $on><Art parts={icons.schematic} />testing circuit for the flamesensor *</DocTab>
        <TabNav>
          <SmallButton aria-label="Previous tab"><Arrow dir="l" color={NAVY} /></SmallButton>
          <SmallButton aria-label="Next tab"><Arrow dir="r" color={NAVY} /></SmallButton>
        </TabNav>
      </DocTabs>
    </Center>
  );
}

function InstrumentBar() {
  return (
    <Instruments>
      <SideGrip />
      {Object.entries(sideIcons).map(([name, parts]) => (
        <SideTool key={name} aria-label={name}><Art parts={parts} size={15} /></SideTool>
      ))}
      <SideRule />
      <SideTool aria-label="Current probe">
        <Svg width="18" height="16" viewBox="0 0 18 16" aria-hidden="true">
          <path d="M5 2C1 3 0 8 1 14H7C10 13 10 10 9 8L17 4V1L12 4L10 3Z" fill={G} />
          <ellipse cx="5" cy="8" rx="2" ry="4" fill={FACE} />
          <path d="M8 10L15 9" stroke={G} strokeWidth="3" />
        </Svg>
      </SideTool>
      <SideRule />
      <SideTool aria-label="LabVIEW instruments">
        <Svg width="16" height="16" viewBox="0 0 16 16" shapeRendering="crispEdges" aria-hidden="true">
          <path d="M2 2H14V14H2Z" fill={G} />
          <path d="M3 .5H14M3 15.500H14M.5 3V14M15.500 3V14" stroke={G} strokeDasharray="1 1" strokeWidth="2" />
        </Svg>
      </SideTool>
      <SideArrow aria-label="More LabVIEW instruments"><Svg width="4" height="6" viewBox="0 0 4 6" aria-hidden="true"><path d="M0 0V6L3 3Z" fill={G} /></Svg></SideArrow>
      <SideTool aria-label="Measurement probe">
        <Svg width="17" height="15" viewBox="0 0 17 15" aria-hidden="true">
          <path d="M1 1H6L4 3L8 6L6 7L3 4L1 6Z" fill="#ffff00" stroke="#606000" strokeWidth=".7" />
          <rect x="1" y="6" width="15" height="8" rx="3" fill="#ffff00" stroke="#606000" strokeWidth=".7" />
          <text x="8" y="13" textAnchor="middle" fontSize="7" fontWeight="700" fontFamily='"Liberation Sans", sans-serif'>1.4v</text>
        </Svg>
      </SideTool>
      <SideArrow aria-label="More probes"><Svg width="4" height="6" viewBox="0 0 4 6" aria-hidden="true"><path d="M0 0V6L3 3Z" /></Svg></SideArrow>
    </Instruments>
  );
}

function Multimeter() {
  return (
    <MeterWindow role="dialog" aria-label="Multimeter-XMM1">
      <MeterHead>
        <MeterIcon><ChipLogo w={17} h={14} /></MeterIcon>
        <MeterTitle>Multimeter-X...</MeterTitle>
        <MeterClose aria-label="Close multimeter">
          <Svg width="12" height="10" viewBox="0 0 12 10" aria-hidden="true">
            <path d="M2 1L10 9M10 1L2 9" stroke="#3a2530" strokeWidth="4" />
            <path d="M2 1L10 9M10 1L2 9" stroke="#fff" strokeWidth="2.500" />
          </Svg>
        </MeterClose>
      </MeterHead>
      <MeterBody>
        <Reading>5 V</Reading>
        <Group $w={140} $h={28}>
          <MeterButton $w={25} $h={20}>A</MeterButton>
          <MeterButton $w={26} $h={20} $on>V</MeterButton>
          <MeterButton $w={27} $h={20}>Ω</MeterButton>
          <MeterButton $w={26} $h={20}>dB</MeterButton>
        </Group>
        <Group $w={95} $h={23}>
          <MeterButton $w={37} $h={16} aria-label="AC">
            <Svg width="22" height="8" viewBox="0 0 22 8" aria-hidden="true"><path d="M0 6H2L6 1H9L14 7H17L21 3" fill="none" stroke={K} strokeWidth="1.500" /></Svg>
          </MeterButton>
          <MeterButton $w={35} $h={15} $on aria-label="DC">
            <Svg width="22" height="2" viewBox="0 0 22 2" aria-hidden="true"><path d="M0 0H22V2H0Z" /></Svg>
          </MeterButton>
        </Group>
        <Terminals>
          <Terminal>+<Jack /></Terminal>
          <MeterButton $w={57} $h={16}>Set...</MeterButton>
          <Terminal>–<Jack /></Terminal>
        </Terminals>
        <ResizeGrip>
          <Svg width="11" height="11" viewBox="0 0 11 11" aria-hidden="true"><path d="M8 0H10V2H8ZM4 4H6V6H4ZM8 4H10V6H8ZM0 8H2V10H0ZM4 8H6V10H4ZM8 8H10V10H8Z" fill="#b0b0b0" /></Svg>
        </ResizeGrip>
      </MeterBody>
    </MeterWindow>
  );
}

function Jack() {
  return (
    <Svg width="12" height="12" viewBox="0 0 12 12" aria-hidden="true">
      <circle cx="6" cy="6" r="5" fill="#fff" stroke="#d8d8d8" />
      <path d="M2.500 9.500A5 5 0 0 1 9.500 2.500" fill="none" stroke="#707070" />
      <circle cx="6" cy="6" r="2" fill="#909090" />
    </Svg>
  );
}

function WindowsTaskBar() {
  return (
    <TaskBar>
      <StartButton aria-label="Start">
        <Svg width="38" height="38" viewBox="0 0 38 38" aria-hidden="true">
          <defs>
            <radialGradient id="orb" cx=".5" cy=".9" r=".9">
              <stop offset="0" stopColor="#4fd8ff" /><stop offset=".5" stopColor="#1d5c9c" /><stop offset="1" stopColor="#a8bcd4" />
            </radialGradient>
          </defs>
          <circle cx="19" cy="19" r="18" fill="url(#orb)" stroke="#0b1f40" />
          <path d="M12 10C15 8 17 9 19 11L17 18C14 16 12 16 9 18Z" fill="#f0592a" />
          <path d="M20 12C23 14 26 13 29 11L27 19C24 21 21 20 18 19Z" fill="#8cc63f" />
          <path d="M8 20C11 18 14 18 16 20L14 28C11 26 9 26 6 28Z" fill="#3fa9f5" />
          <path d="M18 21C21 23 24 22 26 21L24 28C21 30 18 29 15 28Z" fill="#ffc81e" />
        </Svg>
      </StartButton>
      <TaskButton aria-label="Spotify">
        <Svg width="32" height="34" viewBox="0 0 32 34" aria-hidden="true">
          <circle cx="16" cy="17" r="16" fill="#82b719" />
          <path d="M6 12C13 9 20 10 27 14M7 18C13 16 19 16 25 20M8 24C13 22 18 22 23 25" fill="none" stroke="#1e3410" strokeWidth="3.500" strokeLinecap="round" />
        </Svg>
      </TaskButton>
      <TaskButton $open aria-label="Explorer">
        <Svg width="34" height="32" viewBox="0 0 34 32" aria-hidden="true">
          <path d="M2 3H12L14 5H31V28H2Z" fill="#e8c860" />
          <path d="M5 2H12V5H5Z" fill="#3db04a" /><path d="M13 4H20V7H13Z" fill="#c83c28" /><path d="M21 6H28V8H21Z" fill="#3c78c8" />
          <path d="M1 7H20L22 9H33V28H1Z" fill="#f8e8a8" stroke="#c8a848" />
          <path d="M6 31V22Q6 18 10 18H26Q30 18 30 22V31H25V24H11V31Z" fill="#8cd0f0" stroke="#4898c8" />
        </Svg>
      </TaskButton>
      <TaskButton $open aria-label="Messenger">
        <Svg width="34" height="32" viewBox="0 0 34 32" aria-hidden="true">
          <circle cx="12" cy="8" r="5" fill="#88c070" /><path d="M4 27Q4 13 12 13T20 27Z" fill="#4c9c48" />
          <circle cx="22" cy="7" r="5" fill="#a0d4f4" /><path d="M15 24Q15 12 22 12T30 24Z" fill="#3c98d0" />
          <path d="M1 17C8 12 18 14 20 19C16 24 8 25 2 25M33 14Q31 20 26 22" fill="none" stroke="#e0b868" strokeWidth="3" />
          <rect x="19" y="18" width="11" height="11" fill="#30d820" stroke="#108808" />
        </Svg>
      </TaskButton>
      <TaskButton aria-label="Media Player">
        <Svg width="28" height="28" viewBox="0 0 28 28" aria-hidden="true">
          <path d="M8 2H26V26H8Z" fill="#88c4e8" stroke="#b0dcf4" /><path d="M2 2H20V25H2Z" fill="#b8d8ec" stroke="#78a8c8" />
          <circle cx="12" cy="14" r="9" fill="#f07818" stroke="#fff" /><path d="M9 9V19L17 14Z" fill="#fff" />
        </Svg>
      </TaskButton>
      <TaskButton $open aria-label="Chrome">
        <Svg width="32" height="32" viewBox="0 0 32 32" aria-hidden="true">
          <circle cx="16" cy="16" r="15" fill="#f4cc28" />
          <path d="M3 8.500A15 15 0 0 1 30 11H16L10 19Z" fill="#dc3028" />
          <path d="M3 8.500A15 15 0 0 0 14 31L19 22L10 20Z" fill="#38a048" />
          <circle cx="16" cy="16" r="7" fill="#fff" /><circle cx="16" cy="16" r="5" fill="#3c80c8" />
        </Svg>
      </TaskButton>
      <TaskButton $open $active aria-label="Multisim">
        <Svg width="34" height="32" viewBox="0 0 34 32" aria-hidden="true">
          <path d="M10 5L20 8M7 9L17 12M4 13L14 16M1 17L11 20M21 6L32 9M19 11L29 14M17 16L26 19M13 21L21 24" stroke="#1a3080" strokeWidth="3" strokeDasharray="5 1" />
          <path d="M20 18L26 16L32 18V23Q31 28 26 31Q21 28 20 23Z" fill="#3c7cd0" stroke="#dce8f8" />
          <path d="M26 17L31 19V23H26ZM21 23H26V30Q22 28 21 23Z" fill="#f8c820" />
        </Svg>
      </TaskButton>
      <TaskButton $open aria-label="On-screen keyboard">
        <Svg width="34" height="34" viewBox="0 0 34 34" aria-hidden="true">
          <path d="M8 3L31 1L29 22L12 25Z" fill="#f0f0f0" /><path d="M10 5L29 3L27 20L13 22Z" fill="#1848d0" />
          <ellipse cx="22" cy="29" rx="10" ry="4" fill="#e8e8e8" /><path d="M19 24H25V29H19Z" fill="#c8c8c8" />
          <rect x="1" y="8" width="22" height="10" fill="#48b0e8" stroke="#e0f0f8" />
          <path d="M3 11H21M3 14H21M5 16.500H19" stroke="#e8f8ff" strokeDasharray="2 1" />
        </Svg>
      </TaskButton>

      <MediaBand>
        <RoundButton aria-label="Previous"><Svg width="10" height="8" viewBox="0 0 10 8" aria-hidden="true"><path d="M5 1V7L1 4ZM9 1V7L5 4Z" fill="#333" /></Svg></RoundButton>
        <RoundButton aria-label="Play"><Svg width="8" height="10" viewBox="0 0 8 10" aria-hidden="true"><path d="M1 0V10L8 5Z" fill="#222" /></Svg></RoundButton>
        <RoundButton aria-label="Next"><Svg width="10" height="8" viewBox="0 0 10 8" aria-hidden="true"><path d="M1 1V7L5 4ZM5 1V7L9 4Z" fill="#333" /></Svg></RoundButton>
        <Svg width="76" height="16" viewBox="0 0 76 16" aria-hidden="true">
          <path d="M4 6H7L11 3V13L7 10H4Z" fill="#303030" />
          <path d="M15 7H56V9H15Z" fill="#404040" stroke="#d0d0d0" strokeWidth=".5" />
          <circle cx="57" cy="8" r="4" fill="#d8d8d8" stroke="#404040" /><circle cx="57" cy="8" r="1.500" fill="#404040" />
          <path d="M64 6H66L70 3V13L66 10H64Z" fill="#404040" /><path d="M71 5Q73 8 71 11M73 4Q76 8 73 12" fill="none" stroke="#404040" />
        </Svg>
        <Svg width="11" height="22" viewBox="0 0 11 22" aria-hidden="true">
          <rect x=".5" y=".5" width="10" height="10" fill="#d0d0d0" stroke="#606060" /><path d="M4.500 2.500H8.500V6.500H4.500ZM2.500 4.500H6.500V8.500H2.500Z" fill="none" stroke="#303030" />
          <rect x=".5" y="12.500" width="10" height="9" fill="#d0d0d0" stroke="#606060" /><path d="M2 15H9L5.500 19Z" fill="#303030" />
        </Svg>
      </MediaBand>

      <TrayButton aria-label="Updates">
        <Svg width="18" height="18" viewBox="0 0 18 18" aria-hidden="true">
          <path d="M5 10L13 16M13 9L4 16" stroke="#e8e8e8" strokeWidth="3" /><path d="M2 3H14L15 10L9 13L2 10Z" fill="#e8e8e8" />
          <circle cx="10" cy="7" r="5" fill="#38a828" stroke="#d0f0c8" /><path d="M7 7L9 9L13 5" fill="none" stroke="#fff" strokeWidth="2" />
        </Svg>
      </TrayButton>
      <TrayButton aria-label="Security">
        <Svg width="16" height="16" viewBox="0 0 16 16" aria-hidden="true"><path d="M9 1H15V10Q13 14 9 15Z" fill="#5868d8" stroke="#b0b8f0" /><path d="M1 2.500H8M2 5.500H8M3 8.500H8M4 11.500H8M6 14.500H9" stroke="#98a4e8" strokeWidth="2" /></Svg>
      </TrayButton>
      <TrayButton aria-label="Skype">
        <Svg width="16" height="16" viewBox="0 0 16 16" aria-hidden="true"><circle cx="6" cy="6" r="5" fill="#e4e4e4" /><circle cx="10" cy="10" r="5" fill="#e4e4e4" /><circle cx="8" cy="8" r="6" fill="#e4e4e4" /><path d="M5 5L11 11M11 5L5 11" stroke="#a0a0a0" strokeWidth="2" /></Svg>
      </TrayButton>
      <TrayButton aria-label="Action center">
        <Svg width="16" height="16" viewBox="0 0 16 16" aria-hidden="true"><path d="M2.500 1V15" stroke="#fff" strokeWidth="1.500" /><path d="M4 2Q7 0 9 3T14 3V9Q11 10 9 8T4 9Z" fill="#fff" /><circle cx="11" cy="11" r="4.500" fill="#d02818" /><path d="M9 9L13 13M13 9L9 13" stroke="#fff" strokeWidth="1.500" /></Svg>
      </TrayButton>
      <TrayButton aria-label="O2 connection">
        <Svg width="16" height="16" viewBox="0 0 16 16" aria-hidden="true"><rect x=".5" y=".5" width="15" height="15" fill="#123a70" stroke="#8aa4c4" /><circle cx="7" cy="7" r="3.500" fill="none" stroke="#fff" strokeWidth="2" /><path d="M11 10H13V12H11V14H14" fill="none" stroke="#fff" /></Svg>
      </TrayButton>
      <TrayButton aria-label="Signal">
        <Svg width="14" height="12" viewBox="0 0 14 12" aria-hidden="true"><path d="M0 10H2V12H0ZM3 8H5V12H3ZM6 6H8V12H6ZM9 3H11V12H9ZM12 0H14V12H12Z" fill="#fff" /></Svg>
      </TrayButton>
      <TrayButton aria-label="Battery">
        <Svg width="16" height="16" viewBox="0 0 16 16" aria-hidden="true"><path d="M2.500 3.500H9.500V14.500H2.500ZM4.500 1.500H7.500V3" fill="none" stroke="#fff" strokeWidth="1.500" /><path d="M7 5H14V8L12 10H9L7 8ZM9 2V5M12 2V5M10.500 10V14" fill="#fff" stroke="#fff" /></Svg>
      </TrayButton>
      <TrayButton aria-label="Volume">
        <Svg width="16" height="14" viewBox="0 0 16 14" aria-hidden="true"><path d="M1 5H4L8 1V13L4 9H1Z" fill="#fff" /><path d="M10 4Q12 7 10 10M12 2Q16 7 12 12" fill="none" stroke="#fff" /></Svg>
      </TrayButton>
      <Clock><span>23:31</span><span>20/06/2010</span></Clock>
      <ShowDesktop aria-label="Show desktop" />
    </TaskBar>
  );
}

export default function App() {
  return (
    <Frame>
      <GlobalStyle />
      <TitleBar>
        <AppIcon><ChipLogo /></AppIcon>
        <TitleText>testing circuit for the flamesensor - Multisim - [testing circuit for the flamesensor *]</TitleText>
        <Caption>
          <CaptionButton $w={27} aria-label="Minimize"><Svg width="12" height="5" viewBox="0 0 12 5" aria-hidden="true"><path d="M.5 .5H11.500V4.500H.5Z" fill="#fff" stroke="#485878" /></Svg></CaptionButton>
          <CaptionButton $w={27} aria-label="Restore"><Svg width="12" height="12" viewBox="0 0 12 12" aria-hidden="true"><path d="M3.500 .5H11.500V8.500H3.500Z" fill="#fff" stroke="#485878" /><path d="M.5 3.500H8.500V11.500H.5ZM3.500 6.500H5.500V8.500H3.500Z" fill="#fff" stroke="#485878" /></Svg></CaptionButton>
          <CaptionButton $w={46} aria-label="Close"><Svg width="12" height="10" viewBox="0 0 12 10" aria-hidden="true"><path d="M2 1L10 9M10 1L2 9" stroke="#485878" strokeWidth="4" /><path d="M2 1L10 9M10 1L2 9" stroke="#fff" strokeWidth="2.500" /></Svg></CaptionButton>
        </Caption>
      </TitleBar>
      <MenuBar>
        <Art parts={icons.schematic} />
        {menus.map(([a, b, c]) => <MenuItem key={a + b + c}>{a}<u>{b}</u>{c}</MenuItem>)}
        <MdiButtons>
          <SmallButton aria-label="Minimize document"><Svg width="8" height="8" viewBox="0 0 8 8" aria-hidden="true"><path d="M1 6H7V8H1Z" /></Svg></SmallButton>
          <SmallButton aria-label="Restore document"><Svg width="9" height="9" viewBox="0 0 9 9" shapeRendering="crispEdges" aria-hidden="true"><path d="M2.500 3V1.500H8.500V5.500H7M2 .5H9M.5 4.500H6.500V8.500H.5ZM0 3.500H7" fill="none" stroke={K} /></Svg></SmallButton>
          <SmallButton aria-label="Close document"><Cross /></SmallButton>
        </MdiButtons>
      </MenuBar>
      <Toolbars />
      <Workspace>
        <DesignToolbox />
        <Editor />
        <InstrumentBar />
      </Workspace>
      <StatusBar>
        <Pane $w={156}>-</Pane>
        <Pane $w={180}>testing circuit for the flamesensor</Pane>
        <Pane $w={182}>Tran: 3.606 s</Pane>
        <Leds $w={61}>
          <Led $on /><Led /><Led /><Led /><Led /><Led /><Led $on />
        </Leds>
      </StatusBar>
      <WindowsTaskBar />
      <Multimeter />
    </Frame>
  );
}
